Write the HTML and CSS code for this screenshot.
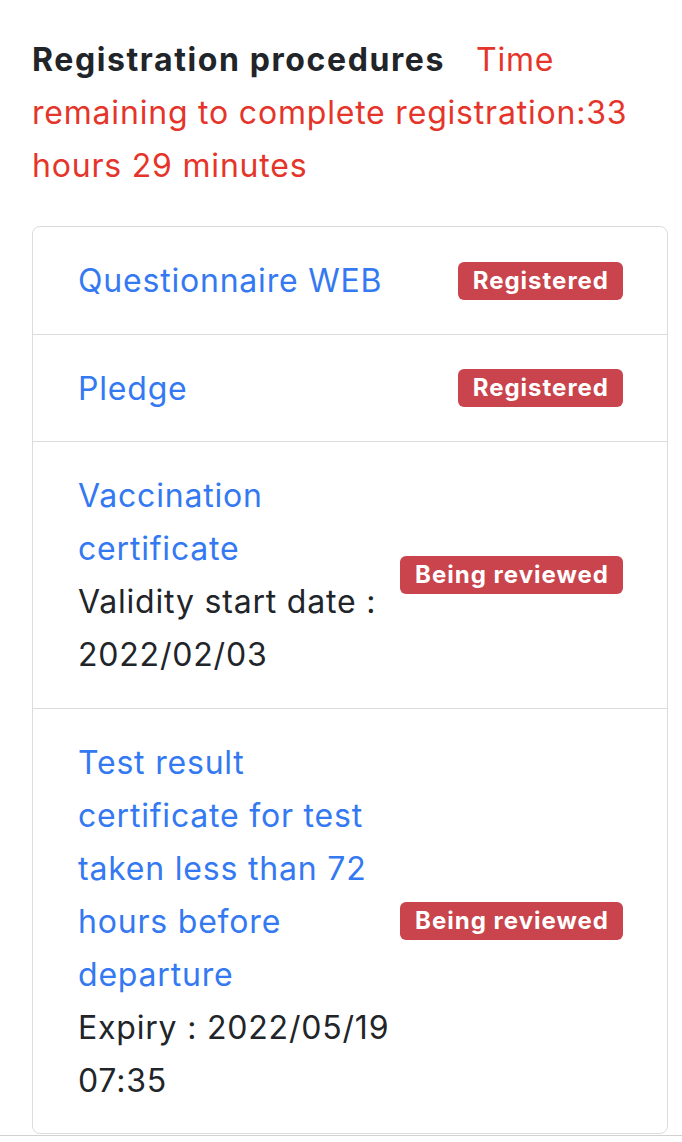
FILE: index.html
```html
<!DOCTYPE html>
<html lang="en">
<head>
<meta charset="utf-8">
<title>Registration procedures</title>
<link rel="stylesheet" href="styles.css">
</head>
<body>
<main class="page">
  <h2 class="heading"><span class="heading-title">Registration procedures</span><span class="heading-time">Time remaining to complete registration:33 hours 29 minutes</span></h2>
  <ul class="list">
    <li class="item">
      <div class="item-text"><a class="item-link" href="#">Questionnaire WEB</a></div>
      <span class="badge">Registered</span>
    </li>
    <li class="item">
      <div class="item-text"><a class="item-link" href="#">Pledge</a></div>
      <span class="badge">Registered</span>
    </li>
    <li class="item">
      <div class="item-text"><a class="item-link" href="#">Vaccination certificate</a><div class="item-note">Validity start date : 2022/02/03</div></div>
      <span class="badge">Being reviewed</span>
    </li>
    <li class="item">
      <div class="item-text"><a class="item-link" href="#">Test result certificate for test taken less than 72 hours before departure</a><div class="item-note">Expiry : 2022/05/19 07:35</div></div>
      <span class="badge">Being reviewed</span>
    </li>
  </ul>
  <div class="bottom-rule"></div>
</main>
</body>
</html>
```

FILE: styles.css
```css
html, body {
  margin: 0;
  padding: 0;
  background: #ffffff;
}

body {
  font-family: Inter, "Noto Sans", "Liberation Sans", sans-serif;
  font-size: 32px;
  line-height: 53px;
  letter-spacing: 0.8px;
  color: #212529;
}

.page {
  padding: 33px 14px 0 32px;
}

.heading {
  margin: 0 0 34px 0;
  font-size: 32px;
  line-height: 53px;
  font-weight: 400;
}

.heading-title {
  font-weight: 700;
  letter-spacing: 1.6px;
  color: #212529;
  margin-right: 31px;
}

.heading-time {
  color: #e5352b;
}

.list {
  list-style: none;
  margin: 0;
  padding: 0;
  border: 1px solid #dcdcdc;
  border-radius: 8px;
}

.item {
  display: flex;
  align-items: center;
  padding: 27px 44px 26.5px 45px;
  border-top: 1px solid #dcdcdc;
}

.item:first-child {
  border-top: none;
}

.item-text {
  flex: 0 1 318px;
  min-width: 0;
}

.item-link {
  color: #3479f2;
  text-decoration: none;
}

.item-note {
  color: #212529;
}

.badge {
  flex: 0 0 auto;
  margin-left: auto;
  background: #c9444c;
  color: #ffffff;
  font-weight: 700;
  font-size: 24px;
  line-height: 26px;
  letter-spacing: 1px;
  padding: 6px 14px 6px 15px;
  border-radius: 6px;
}

.bottom-rule {
  margin: 1px -14px 0 -32px;
  height: 1px;
  background: #d2d2d2;
}
```
